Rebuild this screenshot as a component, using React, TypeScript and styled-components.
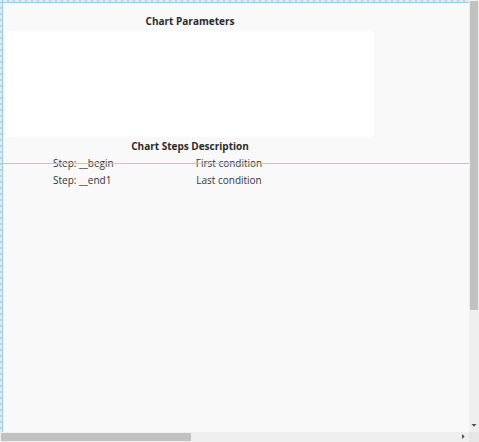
import React from "react";
import styled, { createGlobalStyle } from "styled-components";

const Global = createGlobalStyle`
  html, body { margin: 0; padding: 0; background: #f9f9f9; }
  body { font-family: "Open Sans", "Noto Sans", sans-serif; color: #333; }
`;

const Frame = styled.div`
  width: 479px;
  height: 442px;
  display: grid;
  grid-template-columns: 469px 10px;
  grid-template-rows: 432px 10px;
  background: #f9f9f9;
`;

const Viewport = styled.div`
  overflow: hidden;
  position: relative;
`;

const Canvas = styled.div`
  position: relative;
  width: 1130px;
  height: 585px;
  display: grid;
  grid-template-columns: 3px 1fr;
  grid-template-rows: 3px 1fr;
`;

const RulerCorner = styled.div`
  background: #e4e4e4;
  border-right: 1px solid #8fd4f7;
  border-bottom: 1px solid #8fd4f7;
  box-sizing: border-box;
`;

const TopRuler = styled.div`
  box-sizing: border-box;
  border-bottom: 1px solid #8fd4f7;
  background: repeating-linear-gradient(
    to right,
    #e6e9ec 0 4px,
    #bcd3e2 4px 6px
  );
`;

const LeftRuler = styled.div`
  box-sizing: border-box;
  border-right: 1px solid #8fd4f7;
  background: repeating-linear-gradient(
    to bottom,
    #e6e9ec 0 4px,
    #bcd3e2 4px 6px
  );
`;

const Sheet = styled.div`
  padding-left: 3px;
`;

const Section = styled.div`
  width: 368px;
  display: flex;
  flex-direction: column;
`;

const Title = styled.div<{ $top: number; $bottom: number }>`
  padding: ${(p) => p.$top}px 0 ${(p) => p.$bottom}px;
  line-height: 16px;
  font-size: 10px;
  font-weight: 700;
  color: #2a2a2a;
  text-align: center;
`;

const ParamBox = styled.div`
  height: 106px;
  background: #ffffff;
`;

const StepRow = styled.div`
  display: grid;
  grid-template-columns: 130px 92px;
  padding-left: 47px;
  line-height: 17px;
  font-size: 10px;
  color: #333;
  white-space: nowrap;
`;

const StepName = styled.span`
  text-align: left;
`;

const StepCond = styled.span`
  text-align: center;
`;

const GuideLine = styled.div`
  position: absolute;
  left: 0;
  right: 0;
  top: 163px;
  height: 1px;
  background: #f1b4ad;
  pointer-events: none;
`;

const Track = styled.div<{ $vertical?: boolean }>`
  background: #efefef;
  display: flex;
  flex-direction: ${(p) => (p.$vertical ? "column" : "row")};
  align-items: stretch;
`;

const Thumb = styled.div<{ $vertical?: boolean; $size: number }>`
  background: #c1c1c1;
  margin: 1px;
  ${(p) =>
    p.$vertical ? `height: ${p.$size}px;` : `width: ${p.$size}px;`}
`;

const Spacer = styled.div`
  flex: 1;
`;

const ArrowButton = styled.div`
  width: 10px;
  height: 10px;
  flex: none;
  display: block;
  svg { display: block; }
`;

const Corner = styled.div`
  background: #e6e6e6;
`;

const steps = [
  { name: "Step: __begin", cond: "First condition" },
  { name: "Step: __end1", cond: "Last condition" },
];

export default function App() {
  return (
    <>
      <Global />
      <Frame>
        <Viewport>
          <Canvas>
            <RulerCorner />
            <TopRuler />
            <LeftRuler />
            <Sheet>
              <Section>
                <Title $top={10} $bottom={2}>Chart Parameters</Title>
                <ParamBox />
                <Title $top={1} $bottom={1}>Chart Steps Description</Title>
                {steps.map((s) => (
                  <StepRow key={s.name}>
                    <StepName>{s.name}</StepName>
                    <StepCond>{s.cond}</StepCond>
                  </StepRow>
                ))}
              </Section>
            </Sheet>
            <GuideLine />
          </Canvas>
        </Viewport>
        <Track $vertical>
          <Thumb $vertical $size={309} />
          <Spacer />
          <ArrowButton>
            <svg width="10" height="10" viewBox="0 0 10 10">
              <polygon points="2.5,2 7.5,2 5,4.8" fill="#505050" />
            </svg>
          </ArrowButton>
        </Track>
        <Track>
          <Thumb $size={190} />
          <Spacer />
          <ArrowButton>
            <svg width="10" height="10" viewBox="0 0 10 10">
              <polygon points="3,2 3,7 5.6,4.5" fill="#505050" />
            </svg>
          </ArrowButton>
        </Track>
        <Corner />
      </Frame>
    </>
  );
}
